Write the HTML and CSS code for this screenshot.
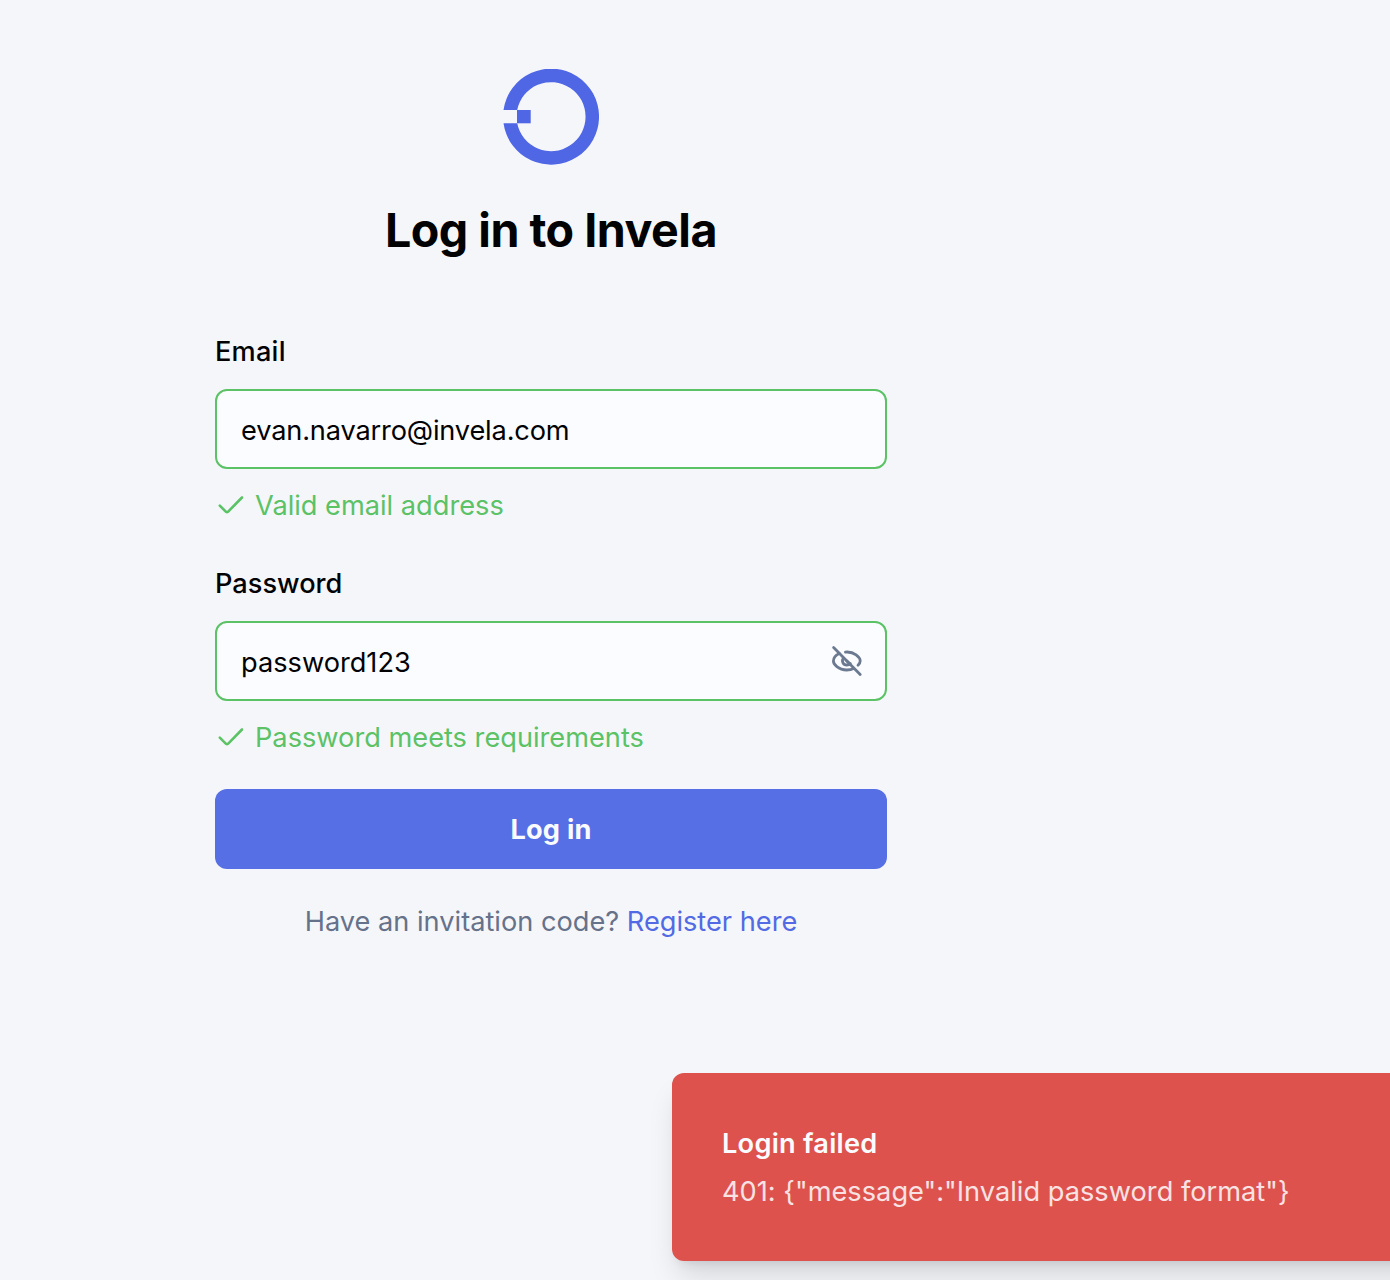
FILE: index.html
```html
<!DOCTYPE html>
<html lang="en">
<head>
<meta charset="utf-8">
<title>Log in to Invela</title>
<link rel="stylesheet" href="styles.css">
</head>
<body>
<main class="login">
  <svg class="logo" viewBox="0 0 96 96" aria-hidden="true">
    <path d="M0.5 41A48 48 0 1 1 0.5 54.3H14.2A34.5 34.5 0 1 0 14.2 41Z"/>
    <path d="M14 41H27.7V54.3H14Z"/>
  </svg>
  <h1 class="title">Log in to Invela</h1>
  <form class="form">
    <label class="label label-email" for="email">Email</label>
    <div class="field"><input class="input input-email" id="email" type="text" value="evan.navarro@invela.com"></div>
    <p class="hint"><svg class="check" viewBox="0 0 32 32" aria-hidden="true"><path d="M4.8 16.6L11 22.8Q12 23.6 13 22.8L27 8.5"/></svg><span class="hint-text">Valid email address</span></p>
    <label class="label" for="password">Password</label>
    <div class="field">
      <input class="input" id="password" type="text" value="password123">
      <svg class="eye" viewBox="0 0 32 32" aria-hidden="true">
        <path d="M2.6 2.6L29.2 29.4"/>
        <path d="M8.2 8.4C4.4 10.3 2.4 13.7 2.4 16C2.4 19 7.2 25 15.8 25C18.6 25 20.8 24.4 22.7 23.4"/>
        <path d="M14.4 7.1C23.2 6.2 29.2 12.4 29.2 16C29.2 17.2 28.4 18.9 27 20.3"/>
        <path d="M12.5 13.1C10.2 15.8 12 20 15.8 20C17.3 20 18.5 19.5 19.3 18.6"/>
        <path d="M15.9 15.9L17.5 17.4"/>
      </svg>
    </div>
    <p class="hint hint-last"><svg class="check" viewBox="0 0 32 32" aria-hidden="true"><path d="M4.8 16.6L11 22.8Q12 23.6 13 22.8L27 8.5"/></svg><span class="hint-text">Password meets requirements</span></p>
    <button class="submit" type="button">Log in</button>
  </form>
  <p class="register"><span>Have an invitation code?</span> <a class="link">Register here</a></p>
</main>
<aside class="toast" role="alert">
  <strong class="toast-title">Login failed</strong>
  <span class="toast-message">401: {"message":"Invalid password format"}</span>
</aside>
</body>
</html>
```
FILE: styles.css
```css
* { box-sizing: border-box; }
body { margin: 0; height: 1280px; overflow: hidden; background: #f5f6fa; font: 400 27.2px/40px Inter, sans-serif; color: #020204; }
.login { width: 672px; margin-left: 215px; padding-top: 69px; display: flex; flex-direction: column; }
.logo { width: 96px; height: 96px; align-self: center; fill: #4f66e5; }
.title { margin: 33px 0 0; font-size: 46.6px; line-height: 64px; font-weight: 700; letter-spacing: -0.5px; text-align: center; white-space: nowrap; }
.form { display: flex; flex-direction: column; margin-top: 75px; }
.label { height: 28px; line-height: 30px; font-weight: 500; }
.label-email { letter-spacing: 0.2px; }
.field { display: flex; position: relative; margin-top: 24px; }
.input { width: 100%; height: 80px; border: 2px solid #5bc266; border-radius: 12px; padding: 2px 24px 0; background: #fbfcff; font: inherit; color: inherit; outline: 0; }
.input-email { letter-spacing: -0.16px; }
.eye { position: absolute; right: 24px; top: 24px; width: 32px; height: 32px; fill: none; stroke: #6b7a90; stroke-width: 2.8; stroke-linecap: round; stroke-linejoin: round; }
.hint { display: flex; align-items: center; gap: 8px; height: 40px; margin: 16px 0 44px; color: #5bc266; }
.hint-text { padding-top: 2px; }
.hint-last { margin-bottom: 32px; }
.check { width: 32px; height: 32px; fill: none; stroke: currentColor; stroke-width: 2.6; stroke-linecap: round; }
.submit { height: 80px; border: 0; border-radius: 12px; padding: 2px 0 0; background: #566fe5; color: #fafbff; font: 700 27.2px/40px Inter, sans-serif; letter-spacing: 0.2px; }
.register { margin: 33px 0 0; text-align: center; color: #65728a; }
.link { color: #526ae4; }
.toast { position: absolute; left: 672px; top: 1073px; width: 780px; height: 188px; border-radius: 12px; background: #de524d; color: #fafbff; padding: 51px 50px 49px; display: flex; flex-direction: column; gap: 8px; box-shadow: 0 20px 30px -6px #0002, 0 8px 12px -8px #0002; }
.toast-title { font-weight: 600; letter-spacing: 0.25px; }
.toast-message { color: #f8e2e3; letter-spacing: 0.02px; }
```
